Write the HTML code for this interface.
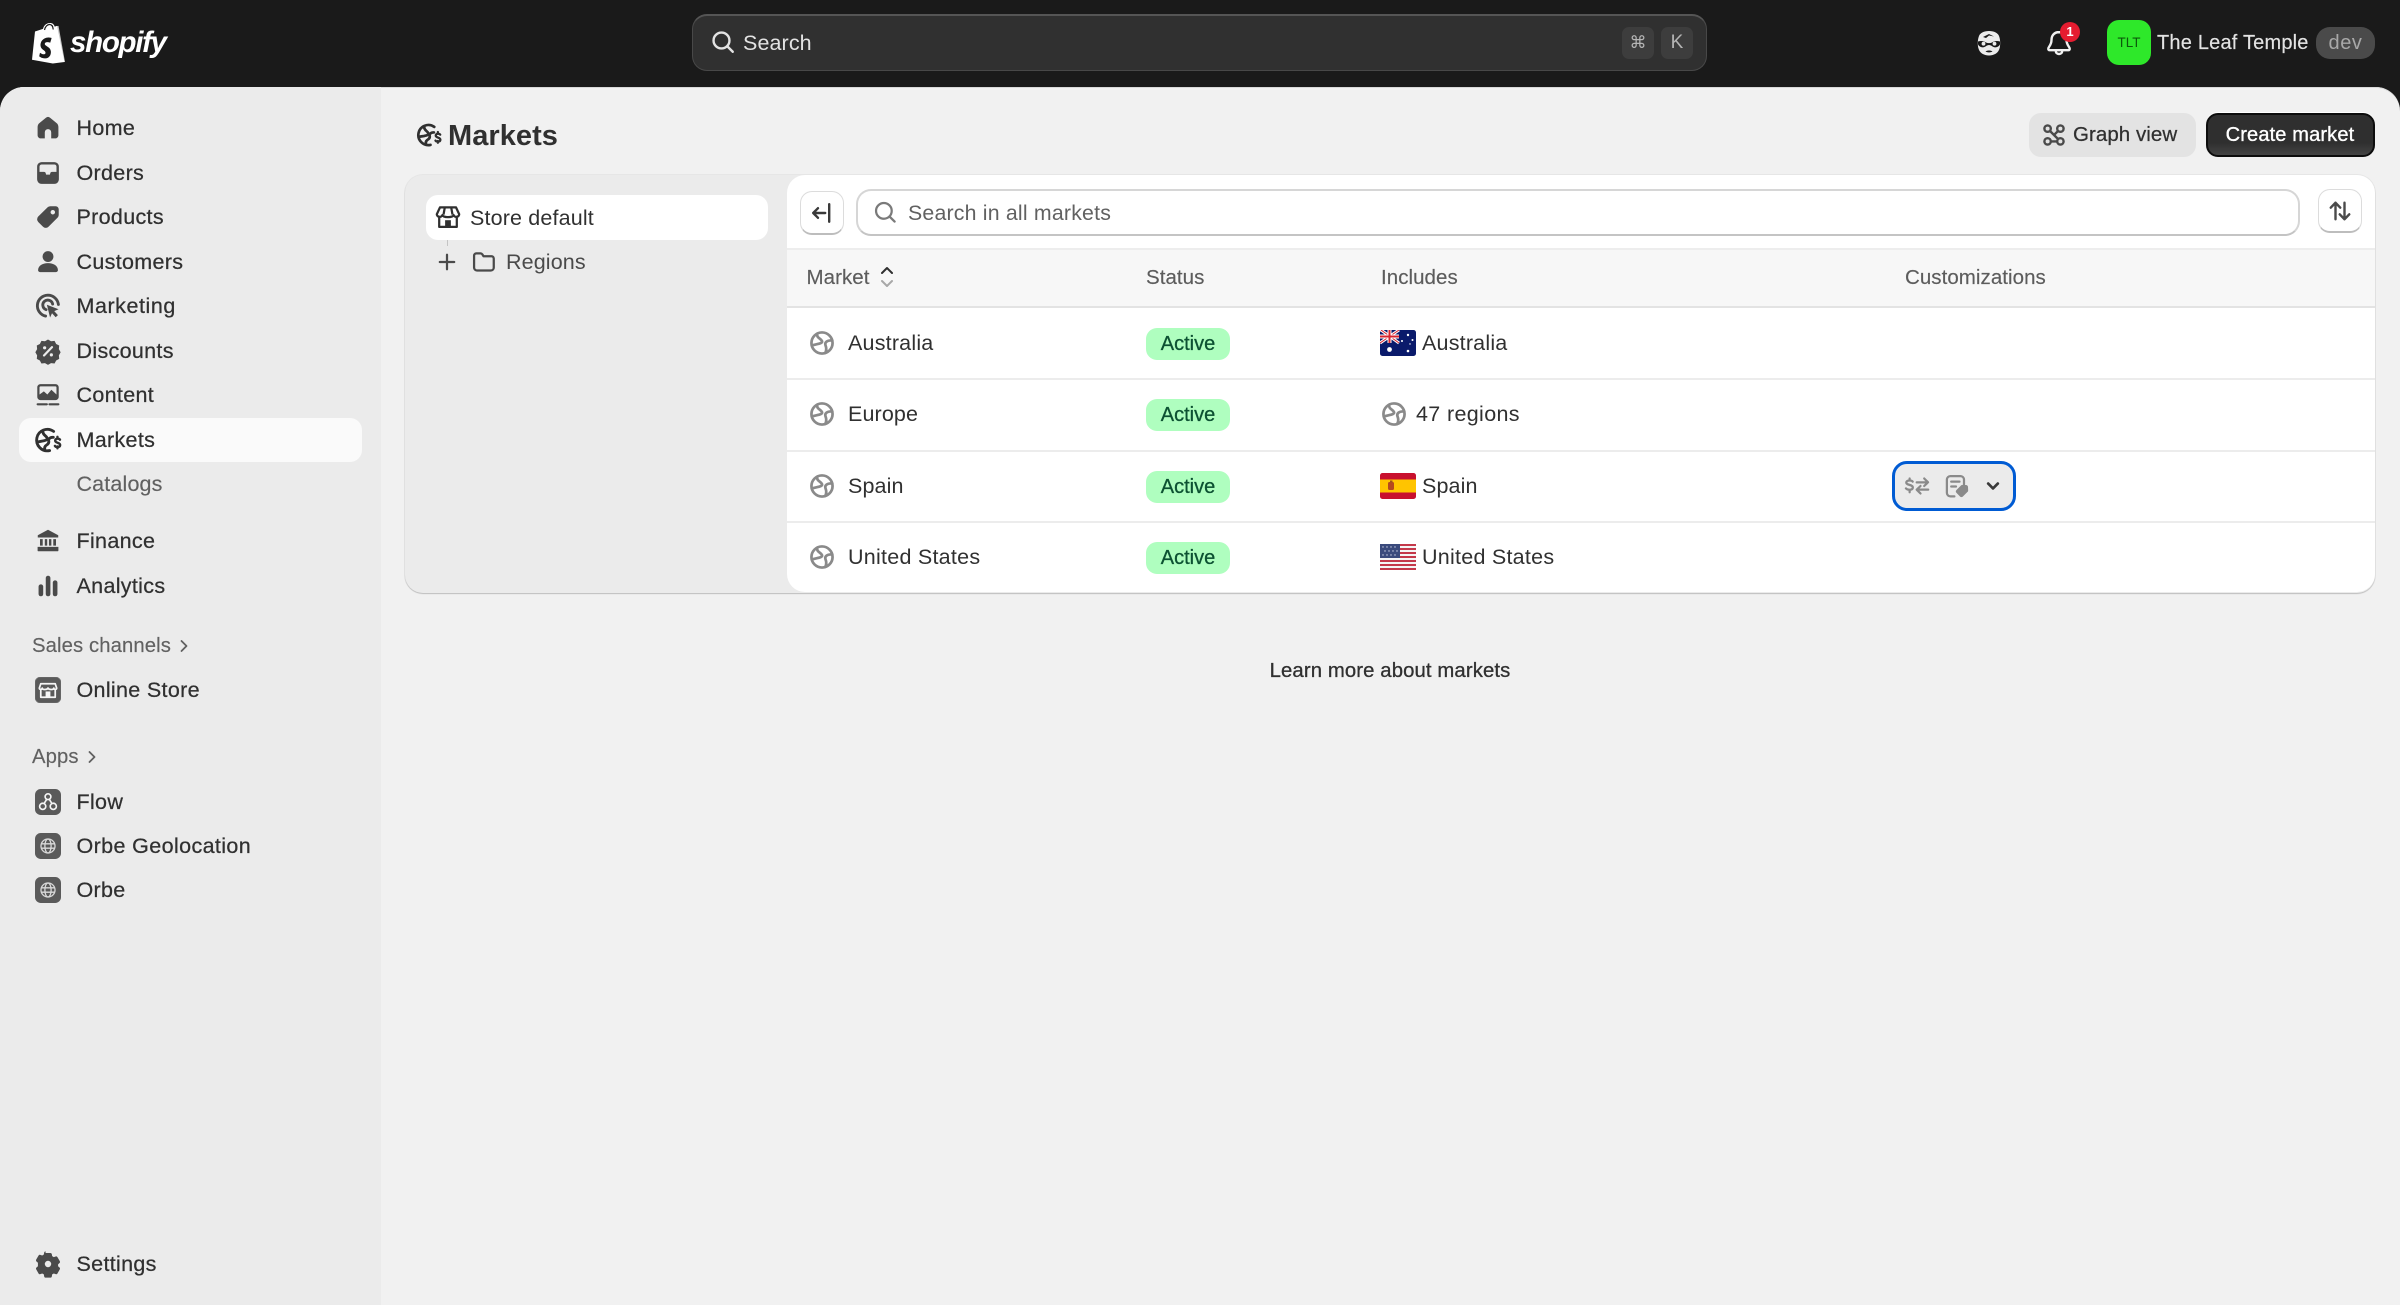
<!DOCTYPE html>
<html lang="en"><head><meta charset="utf-8"><title>Markets</title>
<style>
*{box-sizing:border-box}
html,body{margin:0;padding:0;width:2400px;height:1305px;overflow:hidden;background:#1a1a1a;font-family:"Liberation Sans",sans-serif}
div,svg{position:absolute}
.t{position:absolute;white-space:nowrap;line-height:30px;height:30px;color:#303030;font-size:21.5px;letter-spacing:.12px}
.n{left:76.5px;letter-spacing:.32px;-webkit-text-stroke:.25px #303030}
.s{color:#616161;font-size:20.3px;left:32px;-webkit-text-stroke:.15px #616161;letter-spacing:.1px}
.h{color:#5c5c5c;font-size:20.5px;top:263px;-webkit-text-stroke:.15px #5c5c5c;letter-spacing:.05px}
svg.i{width:32px;height:32px;overflow:visible}
.g{fill:none;stroke:#8a8a8a;stroke-width:1.7;stroke-linecap:round;stroke-linejoin:round}
.d{fill:#4a4a4a}
.l{fill:none;stroke:#4a4a4a;stroke-width:1.6;stroke-linecap:round;stroke-linejoin:round}
.badge{position:absolute;left:1146px;width:84px;height:32px;border-radius:11px;background:#affebf;color:#0c5132;font-size:20px;line-height:32px;text-align:center;-webkit-text-stroke:.3px #0c5132}
.line{left:787px;width:1588px;height:2px;background:#ececec}
</style></head><body>
<svg width="0" height="0" style="position:absolute">
<defs>
<g id="globe" class="g"><circle cx="10" cy="10" r="6.600"/><path d="M7 4.200C6.500 7 9.500 7.200 10 8.800 10.500 10.500 7 10.500 3.700 11.500M16.400 8.500C13.500 8 11.500 9.500 12.200 11.500 12.800 13 13 14.500 12 16.200"/></g>
<g id="mk"><path fill="none" stroke="#303030" stroke-width="1.800" stroke-linecap="round" d="M13.500 4.600A6.700 6.700 0 1 0 11 16.600M6.800 4.300C6.500 7 9 7.200 9.500 8.800 10 10.400 7 10.500 3.600 11.200M8 16c-.4-1.500.3-2.400 1.300-3 1-.6 1.400-1.600 1.100-2.800M13.300 8.300c-1.200-.1-2.100.3-2.700 1"/><path fill="none" stroke="#303030" stroke-width="1.500" stroke-linecap="round" d="M17.500 9.800c-.5-.8-2.900-1-3 .6-.1 1.600 3.200 1 3.100 2.800-.1 1.600-2.700 1.500-3.300.5M15.900 8v1.200M15.900 14v1.200"/></g>
<g id="appglobe" fill="none" stroke="#d9d9d9" stroke-width="1"><circle cx="10" cy="10" r="5.400"/><ellipse cx="10" cy="10" rx="2.400" ry="5.400"/><path d="M4.800 8.300h10.400M4.800 11.700h10.400"/></g>
</defs></svg>

<!-- top bar -->
<svg style="left:30px;top:22px" width="38" height="42" viewBox="0 0 38 42"><path fill="#fff" d="M5 9.500l8-2.600C14 2.500 17.500 1 20 1c2.500 0 4 1.300 4.700 3.600l2.300-.7L34.500 40 22.800 41.500 2 37.800z"/><path fill="none" stroke="#1a1a1a" stroke-width="1.200" d="M14.500 8c.6-3.500 3-5.500 5-5.500 2.300 0 3.500 2.200 3.700 5"/><path fill="#fff" d="M27 4l1.500-.1L35 40l-7-.500z" opacity=".75"/><path fill="#1a1a1a" d="M21.500 16.500l-1.300 4.200s-1.400-.7-3-.6c-2.400.1-2.400 1.600-2.400 2 .2 2.100 5.800 2.600 6.100 7.500.2 3.900-2.100 6.600-5.500 6.800-4 .2-6.200-2.100-6.200-2.100l.8-3.600s2.200 1.700 4 1.600c1.200-.1 1.600-1 1.500-1.700-.2-2.700-4.700-2.600-5-7.100-.2-3.800 2.300-7.600 7.700-8 2.100-.1 3.300.4 3.300.4z"/></svg>
<div class="t" style="left:70px;top:28px;color:#fff;font-size:29.500px;font-weight:bold;font-style:italic;letter-spacing:-1.300px">shopify</div>

<div style="left:692px;top:14px;width:1015px;height:57px;border-radius:15px;background:#303030;border:1px solid #484848;border-top:2px solid #555"></div>
<svg style="left:708px;top:27px" width="30" height="30" viewBox="0 0 20 20"><circle cx="9" cy="9" r="5.300" fill="none" stroke="#e3e3e3" stroke-width="1.600"/><path d="M13 13l3.500 3.500" stroke="#e3e3e3" stroke-width="1.600" stroke-linecap="round"/></svg>
<div class="t" style="left:743px;top:28px;color:#e3e3e3;font-size:21.500px;letter-spacing:.1px">Search</div>
<div style="left:1622px;top:27px;width:32px;height:32px;border-radius:7px;background:#3d3d3d;color:#b5b5b5;font:17px/32px 'DejaVu Sans',sans-serif;text-align:center">⌘</div>
<div style="left:1661px;top:27px;width:32px;height:32px;border-radius:7px;background:#3d3d3d;color:#b5b5b5;font-size:19px;line-height:32px;text-align:center">K</div>

<svg style="left:1973px;top:27px" width="32" height="32" viewBox="0 0 32 32"><path fill="#ececec" d="M6 9c1-3 5-5 10-5s9 2 10 5c1.300 3 1.500 8 .8 11.500C25.700 26 21 28.500 16 28.500S6.300 26 5.200 20.500C4.500 17 4.700 12 6 9z"/><path fill="#1a1a1a" d="M5 14.500c3-1 6-.5 8 1 2 .8 4 .8 6 0 2-1.500 5-2 8-1v2.800c-1.500 3.500-6 4-8.500 1.500-1.600-1-3.400-1-5 0C11 21.300 6.500 20.800 5 17.300zM10 10l6-3 5 2.500-5-1-3 2.500zM12.500 24.500c2-1.300 5-1.300 7 0-2 1.200-5 1.200-7 0z"/><circle cx="10.500" cy="16.700" r="1.900" fill="#ececec"/><circle cx="21.500" cy="16.700" r="1.900" fill="#ececec"/></svg>
<svg style="left:2043px;top:27px" width="32" height="32" viewBox="0 0 20 20"><path fill="none" stroke="#f1f1f1" stroke-width="1.500" stroke-linejoin="round" d="M10 3.200c-3 0-4.700 2.200-4.700 5 0 3-1.900 4.200-2 5.300-.1.600.3 1 .9 1h11.600c.6 0 1-.4.900-1-.1-1.100-2-2.300-2-5.300 0-2.800-1.700-5-4.700-5z"/><path fill="none" stroke="#f1f1f1" stroke-width="1.500" d="M8 15c0 2.500 4 2.500 4 0"/></svg>
<div style="left:2060px;top:22px;width:20px;height:20px;border-radius:50%;background:#e51c30;color:#fff;font-size:13px;font-weight:bold;line-height:20px;text-align:center">1</div>
<div style="left:2107px;top:20px;width:44px;height:45px;border-radius:12px;background:#2ee82a;color:#0b5a0b;font-size:13.500px;line-height:45px;text-align:center">TLT</div>
<div class="t" style="left:2157px;top:28px;color:#e3e3e3;font-size:20px;letter-spacing:.2px;-webkit-text-stroke:.15px #e3e3e3">The Leaf Temple</div>
<div style="left:2316px;top:27px;width:59px;height:32px;border-radius:14px;background:#4a4a4a;color:#a8a8a8;font-size:20px;line-height:32px;text-align:center;letter-spacing:.6px">dev</div>

<!-- main -->
<div style="left:0;top:87px;width:2400px;height:1218px;background:#f1f1f1;border-radius:24px 24px 0 0;overflow:hidden;box-shadow:inset 0 1px 0 #d9d9d9">
<div style="left:0;top:0;width:381px;height:1218px;background:#ebebeb"></div>
</div>

<!-- sidebar -->
<div style="left:19px;top:418px;width:343px;height:44px;border-radius:12px;background:#fafafa"></div>

<svg class="i" style="left:32px;top:112px" viewBox="0 0 20 20"><path class="d" d="M8.700 3.600 4.700 6.900c-.8.600-1.200 1.500-1.200 2.500v5.100c0 1.100.9 2 2 2H8v-3.800a2 2 0 0 1 4 0v3.800h2.500c1.100 0 2-.9 2-2V9.400c0-1-.4-1.900-1.200-2.500l-4-3.300a2 2 0 0 0-2.600 0z"/></svg>
<div class="t n" style="top:113px">Home</div>
<svg class="i" style="left:32px;top:157px" viewBox="0 0 20 20"><path class="d" fill-rule="evenodd" d="M6 3.200h8a2.800 2.800 0 0 1 2.800 2.800v8a2.800 2.800 0 0 1-2.800 2.800H6A2.800 2.800 0 0 1 3.200 14V6A2.800 2.800 0 0 1 6 3.200zM6 4.700A1.300 1.300 0 0 0 4.700 6v3.300h2.800c.6 0 1 .4 1.100.9l.2.800h2.400l.2-.8c.1-.5.500-.9 1.100-.9h2.800V6A1.300 1.300 0 0 0 14 4.700z"/></svg>
<div class="t n" style="top:158px">Orders</div>
<svg class="i" style="left:32px;top:201px" viewBox="0 0 20 20"><path class="d" fill-rule="evenodd" d="M16.700 5.200c0-1-.9-1.900-1.900-1.900h-3.300c-.7 0-1.300.3-1.800.7L3.900 9.700a2.400 2.400 0 0 0 0 3.400l3 3a2.400 2.400 0 0 0 3.400 0l5.700-5.700c.5-.5.700-1.100.7-1.800zM13 5.600a1.400 1.400 0 1 1 0 2.800 1.400 1.400 0 0 1 0-2.800z"/></svg>
<div class="t n" style="top:202px">Products</div>
<svg class="i" style="left:32px;top:246px" viewBox="0 0 20 20"><circle class="d" cx="10" cy="6.600" r="3.400"/><path class="d" d="M3.800 15.100c0-2.700 2.700-4.400 6.200-4.400s6.200 1.700 6.200 4.400c0 .7-.5 1.200-1.200 1.200H5c-.7 0-1.200-.5-1.200-1.200z"/></svg>
<div class="t n" style="top:247px">Customers</div>
<svg class="i" style="left:32px;top:290px" viewBox="0 0 20 20"><path class="l" d="M8.500 16.300A6.600 6.600 0 1 1 16.500 9M8.800 12.300A3.100 3.100 0 1 1 12.900 8.800" style="stroke-width:1.800"/><path class="d" d="M9.300 9.200l7.300 2.800-2.700 1.200 2.300 2.500-1.400 1.300-2.300-2.500-1.200 2.700z"/></svg>
<div class="t n" style="top:291px;letter-spacing:.55px">Marketing</div>
<svg class="i" style="left:32px;top:335px" viewBox="0 0 20 20"><path class="d" fill-rule="evenodd" d="M10 2.800l1.900 1.100 2.200-.2 1 1.900 1.900 1-.2 2.200 1.100 2-1.100 1.900.2 2.200-1.900 1-1 1.900-2.200-.2-1.900 1.100-1.900-1.100-2.200.2-1-1.900-1.900-1 .2-2.200L2.100 10.800l1.100-2L3 6.600l1.900-1 1-1.900 2.200.2z"/><g stroke="#ebebeb" stroke-width="1.400" stroke-linecap="round"><path d="M12.500 7.600l-5 5.200"/></g><circle cx="7.900" cy="8" r="1" fill="#ebebeb"/><circle cx="12.100" cy="12.400" r="1" fill="#ebebeb"/></svg>
<div class="t n" style="top:336px">Discounts</div>
<svg class="i" style="left:32px;top:379px" viewBox="0 0 20 20"><path class="d" fill-rule="evenodd" d="M5.300 3.200h9.400c1.100 0 2 .9 2 2v6c0 1.100-.9 2-2 2H5.300c-1.100 0-2-.9-2-2v-6c0-1.100.9-2 2-2zM4.700 9.700l2.700-2 2.200 2 2.500-3 3.200 3V5.200c0-.3-.3-.6-.6-.6H5.300c-.3 0-.6.3-.6.6z"/><path d="M3.500 15.800h5.800M10.900 15.800h5.600" stroke="#4a4a4a" stroke-width="1.300" stroke-linecap="round"/></svg>
<div class="t n" style="top:380px">Content</div>
<svg class="i" style="left:32px;top:424px" viewBox="0 0 20 20"><use href="#mk"/></svg>
<div class="t n" style="top:425px">Markets</div>
<div class="t" style="left:76.500px;top:469px;color:#616161;letter-spacing:.15px;-webkit-text-stroke:.15px #616161">Catalogs</div>
<svg class="i" style="left:32px;top:525px" viewBox="0 0 20 20"><path class="d" d="M10 3l6.400 3.400v1.400H3.600V6.400zM5 8.800h1.700v4.100H5zM8 8.800h1.500v4.100H8zM10.600 8.800h1.500v4.100h-1.500zM13.300 8.800H15v4.100h-1.700zM3.500 13.700h13v2.200c0 .3-.2.500-.5.500H4c-.3 0-.5-.2-.5-.5z"/></svg>
<div class="t n" style="top:526px">Finance</div>
<svg class="i" style="left:32px;top:570px" viewBox="0 0 20 20"><rect class="d" x="4.100" y="9" width="2.900" height="7.400" rx="1.400"/><rect class="d" x="8.600" y="3.600" width="2.900" height="12.800" rx="1.400"/><rect class="d" x="13" y="6.500" width="2.900" height="9.900" rx="1.400"/></svg>
<div class="t n" style="top:571px">Analytics</div>

<div class="t s" style="top:631px">Sales channels</div>
<svg style="left:174px;top:636px" width="20" height="20" viewBox="0 0 20 20"><path d="M7.500 5L12.500 10l-5 5" fill="none" stroke="#616161" stroke-width="1.800" stroke-linecap="round" stroke-linejoin="round"/></svg>
<svg style="left:35px;top:677px" width="26" height="26" viewBox="0 0 27 27"><rect width="27" height="27" rx="6" fill="#5a5a5a" stroke="#777" stroke-width=".8"/><path fill="none" stroke="#f5f5f5" stroke-width="1.800" stroke-linejoin="round" d="M6 12v9h15v-9M6 7h15l1.500 4.500c0 1.500-2.700 2-3 0-.3 2-5 2-6 0-1 2-5.700 2-6 0-.3 2-3 1.500-3 0z"/><rect x="11" y="15" width="5" height="6" fill="#f5f5f5"/></svg>
<div class="t n" style="top:675px">Online Store</div>

<div class="t s" style="top:742px">Apps</div>
<svg style="left:82px;top:747px" width="20" height="20" viewBox="0 0 20 20"><path d="M7.500 5L12.500 10l-5 5" fill="none" stroke="#616161" stroke-width="1.800" stroke-linecap="round" stroke-linejoin="round"/></svg>
<svg style="left:35px;top:789px" width="26" height="26" viewBox="0 0 27 27"><rect width="27" height="27" rx="6" fill="#5a5a5a"/><g fill="none" stroke="#f5f5f5" stroke-width="1.700"><circle cx="13.500" cy="8" r="3"/><circle cx="8" cy="18" r="3.200"/><circle cx="19" cy="18" r="3.200"/><path d="M12 11l-2.500 4M15 11l2.500 4"/></g></svg>
<div class="t n" style="top:787px">Flow</div>
<svg style="left:35px;top:833px" width="26" height="26" viewBox="0 0 20 20"><rect width="20" height="20" rx="4.500" fill="#5a5a5a"/><use href="#appglobe"/></svg>
<div class="t n" style="top:831px;letter-spacing:.38px">Orbe Geolocation</div>
<svg style="left:35px;top:877px" width="26" height="26" viewBox="0 0 20 20"><rect width="20" height="20" rx="4.500" fill="#5a5a5a"/><use href="#appglobe"/></svg>
<div class="t n" style="top:875px">Orbe</div>

<svg class="i" style="left:32px;top:1248px" viewBox="0 0 20 20"><path class="d" fill-rule="evenodd" d="M8.500 3.100h3c.5 0 .8.300.9.800l.2 1.200 1 .6 1.200-.4c.4-.2.900 0 1.100.4l1.500 2.600c.2.400.1.800-.2 1.100l-.9.800v1.200l.9.800c.3.300.4.700.2 1.100l-1.500 2.600c-.2.400-.7.600-1.100.4l-1.200-.4-1 .6-.2 1.200c-.1.500-.4.800-.9.800h-3c-.5 0-.8-.3-.9-.8l-.2-1.200-1-.6-1.200.4c-.4.200-.9 0-1.100-.4l-1.500-2.600c-.2-.4-.1-.8.200-1.100l.9-.8V9.200l-.9-.8c-.3-.3-.4-.7-.2-1.100l1.500-2.600c.2-.4.700-.6 1.100-.4l1.200.4 1-.6.200-1.200c.1-.5.400-.8.900-.8zM10 8a2 2 0 1 0 0 4 2 2 0 0 0 0-4z"/></svg>
<div class="t n" style="top:1249px">Settings</div>

<!-- page header -->
<svg style="left:414px;top:120px" width="30" height="30" viewBox="0 0 20 20"><use href="#mk"/></svg>
<div class="t" style="left:448px;top:120.500px;font-size:29px;font-weight:bold;color:#303030;letter-spacing:.05px">Markets</div>
<div style="left:2029px;top:113px;width:167px;height:44px;border-radius:12px;background:#e3e3e3"></div>
<svg style="left:2038px;top:119px" width="32" height="32" viewBox="0 0 20 20"><g fill="none" stroke="#4a4a4a" stroke-width="1.500"><circle cx="6" cy="6" r="2"/><circle cx="14" cy="6" r="2"/><circle cx="6" cy="14" r="2"/><circle cx="14" cy="14" r="2"/><path d="M7.500 7.500l5 5M12.600 7.400L10.500 9.500M8 14h4"/></g></svg>
<div class="t" style="left:2073px;top:120px;font-size:20.500px;-webkit-text-stroke:.25px #303030;letter-spacing:.05px">Graph view</div>
<div style="left:2206px;top:113px;width:169px;height:44px;border-radius:12px;background:linear-gradient(#2f2f2f,#2f2f2f 70%,#444);border:2px solid #0d0d0d;box-shadow:0 -1px 0 #fff"></div>
<div class="t" style="left:2225px;top:120px;width:130px;text-align:center;color:#fff;font-size:20px;-webkit-text-stroke:.35px #fff;letter-spacing:.15px">Create market</div>

<!-- card -->
<div style="left:405px;top:175px;width:1970px;height:418px;border-radius:18px;background:#ebebeb;box-shadow:0 1px 1px rgba(0,0,0,.18),0 0 0 1px #e6e6e6"></div>
<div style="left:787px;top:175px;width:1588px;height:417px;border-radius:18px;background:#fff"></div>
<div style="left:426px;top:195px;width:342px;height:45px;border-radius:12px;background:#fff"></div>
<svg style="left:432px;top:201px" width="32" height="32" viewBox="0 0 20 20"><g fill="none" stroke="#303030" stroke-width="1.400" stroke-linejoin="round"><path d="M5 4h10l2 4.300c0 1.800-3 2.200-3.500.5-.4 1.700-6.600 1.700-7 0C6 10.500 3 10.100 3 8.300zM4.500 10v6.200h11V10"/><path d="M8 4L7.200 8.500M12 4l.8 4.500"/></g><rect x="8.200" y="12" width="3.600" height="4.200" fill="#303030"/></svg>
<div class="t" style="left:470px;top:202.500px;letter-spacing:.15px">Store default</div>
<div style="left:447px;top:240px;width:1px;height:6px;background:#c4c4c4"></div>
<svg style="left:431px;top:246px" width="32" height="32" viewBox="0 0 20 20"><path d="M10 5.500v9M5.500 10h9" stroke="#4a4a4a" stroke-width="1.400" stroke-linecap="round"/></svg>
<svg style="left:468px;top:246px" width="32" height="32" viewBox="0 0 20 20"><path fill="none" stroke="#4a4a4a" stroke-width="1.400" stroke-linejoin="round" d="M3.800 6c0-.8.600-1.400 1.400-1.400h2.600c.5 0 .9.300 1.200.7l.7 1.100h5c.8 0 1.400.6 1.400 1.400v5.700c0 1-.8 1.800-1.800 1.800H5.600c-1 0-1.800-.8-1.800-1.800z"/></svg>
<div class="t" style="left:506px;top:247px;color:#4a4a4a">Regions</div>

<!-- toolbar -->
<div style="left:800px;top:191px;width:44px;height:44px;border-radius:12px;background:#fff;border:1px solid #dcdcdc;border-bottom:2px solid #bdbdbd"></div>
<svg style="left:806px;top:197px" width="32" height="32" viewBox="0 0 20 20"><path d="M14.500 4.500v11M12 10H4.500M7.500 7l-3 3 3 3" fill="none" stroke="#3a3a3a" stroke-width="1.500" stroke-linecap="round" stroke-linejoin="round"/></svg>
<div style="left:856px;top:189px;width:1444px;height:47px;border-radius:15px;background:#fff;border:2px solid #d6d6d6;border-bottom-color:#c4c4c4"></div>
<svg style="left:869px;top:196px" width="32" height="32" viewBox="0 0 20 20"><circle cx="9.300" cy="9.300" r="4.900" fill="none" stroke="#7a7a7a" stroke-width="1.400"/><path d="M13 13l3 3" stroke="#7a7a7a" stroke-width="1.400" stroke-linecap="round"/></svg>
<div class="t" style="left:908px;top:198px;color:#616161;font-size:21.300px;letter-spacing:.2px">Search in all markets</div>
<div style="left:2318px;top:189px;width:44px;height:44px;border-radius:12px;background:#fff;border:1px solid #dcdcdc;border-bottom:2px solid #bdbdbd"></div>
<svg style="left:2325px;top:196px" width="30" height="30" viewBox="0 0 20 20"><path d="M7 15.500v-11M3.800 7.800L7 4.500l3.200 3.300M13 4.500v11M9.800 12.200L13 15.500l3.200-3.300" fill="none" stroke="#4a4a4a" stroke-width="1.600" stroke-linecap="round" stroke-linejoin="round"/></svg>

<!-- table header -->
<div style="left:787px;top:248px;width:1588px;height:60px;background:#f7f7f7;border-top:2px solid #ededed;border-bottom:2px solid #e3e3e3"></div>
<div class="t h" style="left:806.500px">Market</div>
<svg style="left:875px;top:264px" width="24" height="26" viewBox="0 0 24 26"><path d="M7 9l5-5 5 5" fill="none" stroke="#303030" stroke-width="2" stroke-linecap="round" stroke-linejoin="round"/><path d="M7 17l5 5 5-5" fill="none" stroke="#a8a8a8" stroke-width="2" stroke-linecap="round" stroke-linejoin="round"/></svg>
<div class="t h" style="left:1146px">Status</div>
<div class="t h" style="left:1381px">Includes</div>
<div class="t h" style="left:1905px">Customizations</div>

<!-- rows -->
<div class="line" style="top:378px"></div>
<div class="line" style="top:449.500px"></div>
<div class="line" style="top:521px"></div>

<svg class="i" style="left:806px;top:327px" viewBox="0 0 20 20"><use href="#globe"/></svg>
<div class="t" style="left:848px;top:328px;letter-spacing:.2px">Australia</div>
<div class="badge" style="top:328px">Active</div>
<svg style="left:1380px;top:330px" width="36" height="26" viewBox="0 0 36 26"><rect width="36" height="26" rx="2.500" fill="#0a1a6b"/><path d="M1 0L19 13M19 0L0 13" stroke="#fff" stroke-width="3"/><path d="M1 0L19 13M19 0L0 13" stroke="#d8232e" stroke-width="1"/><path d="M9.500 0v13M0 6.500h19" stroke="#fff" stroke-width="4"/><path d="M9.500 0v13M0 6.500h19" stroke="#d8232e" stroke-width="2"/><circle cx="9.500" cy="19.500" r="2.400" fill="#fff"/><circle cx="28" cy="5" r="1.200" fill="#fff"/><circle cx="22" cy="11" r="1" fill="#fff"/><circle cx="32.500" cy="10" r="1" fill="#fff"/><circle cx="28" cy="21" r="1.300" fill="#fff"/><circle cx="30" cy="14" r=".7" fill="#fff"/></svg>
<div class="t" style="left:1422px;top:328px;letter-spacing:.2px">Australia</div>

<svg class="i" style="left:806px;top:398px" viewBox="0 0 20 20"><use href="#globe"/></svg>
<div class="t" style="left:848px;top:399px">Europe</div>
<div class="badge" style="top:399px">Active</div>
<svg class="i" style="left:1378px;top:398px" viewBox="0 0 20 20"><use href="#globe"/></svg>
<div class="t" style="left:1416px;top:399px;letter-spacing:.35px">47 regions</div>

<svg class="i" style="left:806px;top:470px" viewBox="0 0 20 20"><use href="#globe"/></svg>
<div class="t" style="left:848px;top:471px">Spain</div>
<div class="badge" style="top:471px">Active</div>
<svg style="left:1380px;top:473px" width="36" height="26" viewBox="0 0 36 26"><rect width="36" height="26" rx="2.500" fill="#c8102e"/><rect y="6.500" width="36" height="13" fill="#ffc400"/><rect x="8" y="9" width="6" height="8" rx="1.500" fill="#b5481e"/><rect x="10" y="7.500" width="2.500" height="2" fill="#a0521c"/></svg>
<div class="t" style="left:1422px;top:471px">Spain</div>

<div style="left:1892px;top:461px;width:124px;height:50px;border-radius:15px;background:#ebebeb;border:3px solid #005bd3"></div>
<svg style="left:1901px;top:470px" width="32" height="32" viewBox="0 0 20 20"><g fill="none" stroke="#8a8a8a" stroke-width="1.400" stroke-linecap="round" stroke-linejoin="round"><path d="M7.300 7.300c-.5-1-3.800-1.200-4 .5-.1 1.800 4.200 1.200 4.100 3.200-.1 1.800-3.500 1.600-4.300.5M5.400 5.300v1M5.400 12.700v1.200"/><path d="M9.800 7.700h7M14.500 5.300l2.400 2.400-2.400 2.300M17 12.300h-7M12.200 10l-2.400 2.300 2.400 2.400"/></g></svg>
<svg style="left:1940px;top:470px" width="32" height="32" viewBox="0 0 20 20"><g fill="none" stroke="#8a8a8a" stroke-width="1.400" stroke-linecap="round"><path d="M9 16.500H6.500a2.200 2.200 0 0 1-2.200-2.200V6a2.200 2.200 0 0 1 2.200-2.200h6.300A2.200 2.200 0 0 1 15 6v3"/><path d="M7 7.300h5.200M7 10.300h3"/></g><path fill="#8a8a8a" d="M17.500 10.500c-.1-.6-.5-1-1.100-1.100l-2.300-.1c-.4 0-.7.100-1 .4l-2.800 2.800a1.300 1.300 0 0 0 0 1.800l2.200 2.300c.5.500 1.300.5 1.800 0l2.900-2.900c.3-.3.400-.600.400-1z"/></svg>
<svg style="left:1977px;top:470px" width="32" height="32" viewBox="0 0 20 20"><path d="M7 8.500l3 3 3-3" fill="none" stroke="#3a3a3a" stroke-width="1.700" stroke-linecap="round" stroke-linejoin="round"/></svg>

<svg class="i" style="left:806px;top:541px" viewBox="0 0 20 20"><use href="#globe"/></svg>
<div class="t" style="left:848px;top:542px;letter-spacing:.25px">United States</div>
<div class="badge" style="top:542px">Active</div>
<svg style="left:1380px;top:544px" width="36" height="26" viewBox="0 0 36 26"><rect width="36" height="26" rx="2.500" fill="#f5f5f5"/><g fill="#c4384a"><rect width="36" height="2"/><rect y="4" width="36" height="2"/><rect y="8" width="36" height="2"/><rect y="12" width="36" height="2"/><rect y="16" width="36" height="2"/><rect y="20" width="36" height="2"/><rect y="24" width="36" height="2"/></g><rect width="20" height="14" fill="#3a4a7c"/><g fill="#cfd4e6"><circle cx="3" cy="3" r=".7"/><circle cx="7" cy="3" r=".7"/><circle cx="11" cy="3" r=".7"/><circle cx="15" cy="3" r=".7"/><circle cx="5" cy="7" r=".7"/><circle cx="9" cy="7" r=".7"/><circle cx="13" cy="7" r=".7"/><circle cx="17" cy="7" r=".7"/><circle cx="3" cy="11" r=".7"/><circle cx="7" cy="11" r=".7"/><circle cx="11" cy="11" r=".7"/><circle cx="15" cy="11" r=".7"/></g></svg>
<div class="t" style="left:1422px;top:542px;letter-spacing:.25px">United States</div>

<div class="t" style="left:1250px;top:656px;width:280px;text-align:center;font-size:20.300px;color:#303030;-webkit-text-stroke:.3px #303030">Learn more about markets</div>
</body></html>
